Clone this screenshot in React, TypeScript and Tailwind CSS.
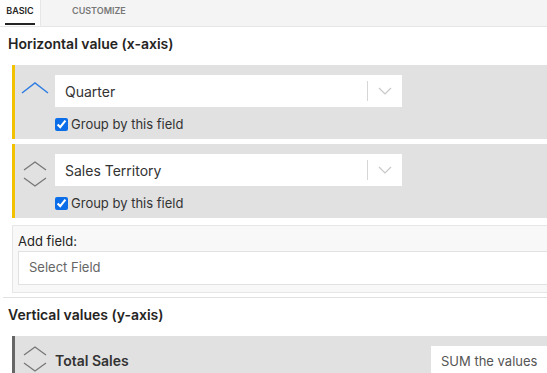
import React from "react"

function ChevronDown() {
  return (
    <svg width="14" height="8" viewBox="0 0 14 8" fill="none">
      <path d="M1 1l6 6 6-6" stroke="#c8c8c8" strokeWidth="1.2" />
    </svg>
  )
}

function UpIcon() {
  return (
    <svg width="28" height="14" viewBox="0 0 28 14" fill="none">
      <path d="M1 12L14 2l13 10" stroke="#2f7de1" strokeWidth="1.5" />
    </svg>
  )
}

function SortIcon() {
  return (
    <svg width="26" height="28" viewBox="0 0 26 28" fill="none">
      <path d="M2 10L13 2l11 8" stroke="#777" strokeWidth="1.3" />
      <path d="M2 18l11 8 11-8" stroke="#777" strokeWidth="1.3" />
    </svg>
  )
}

function FieldCard({ label, up }: { label: string; up?: boolean }) {
  return (
    <div className="ml-3 flex h-[74px] border-l-[3px] border-[#f2c200] bg-[#e1e1e1] pt-[10px]">
      <div className="flex w-[40px] justify-center pt-[6px]">{up ? <UpIcon /> : <SortIcon />}</div>
      <div className="flex flex-col">
        <div className="flex h-[32px] w-[347px] items-center bg-white pl-[10px]">
          <span className="flex-1 text-[14px] text-[#333]">{label}</span>
          <div className="h-[20px] w-px bg-[#d6d6d6]" />
          <div className="flex w-[34px] justify-center">
            <ChevronDown />
          </div>
        </div>
        <label className="mt-[8px] flex items-center gap-[3px] text-[13px] text-[#333]">
          <input type="checkbox" defaultChecked className="m-0 h-[13px] w-[13px] accent-[#0b6ee8]" />
          Group by this field
        </label>
      </div>
    </div>
  )
}

export default function App() {
  return (
    <div className="h-[373px] w-[547px] overflow-hidden bg-white font-['Inter',sans-serif] text-[#252423]">
      {/* Tabs */}
      <div className="flex h-[27px] border-b border-[#e6e6e6]">
        <div className="flex w-[40px] flex-col items-center justify-center bg-white">
          <span className="mt-[3px] text-[9px] font-semibold text-[#252423]">BASIC</span>
          <div className="mt-[5px] h-[2px] w-[30px] bg-[#252423]" />
        </div>
        <div className="flex flex-1 items-center border-l border-[#e6e6e6] bg-[#f4f4f4] pl-[31px] pb-[4px]">
          <span className="text-[9px] font-semibold text-[#777]">CUSTOMIZE</span>
        </div>
      </div>

      <div className="px-[8px] pt-[8px] pb-[12px] text-[14px] font-semibold leading-[18px]">Horizontal value (x-axis)</div>

      <div className="flex flex-col gap-[5px]">
        <FieldCard label="Quarter" up />
        <FieldCard label="Sales Territory" />
      </div>

      {/* Add field */}
      <div className="ml-3 mt-[7px] h-[68px] border border-r-0 border-[#e6e6e6] bg-[#f8f8f8] pl-[5px] pt-[6px]">
        <div className="text-[13px] leading-[18px] text-[#252423]">Add field:</div>
        <div className="mt-[1px] flex h-[34px] items-center border border-r-0 border-[#e1e1e1] bg-white pl-[10px] text-[13px] text-[#666]">
          Select Field
        </div>
      </div>

      <div className="ml-[3px] mt-[4px] border-t border-[#e1e1e1]" />

      <div className="px-[8px] pt-[8px] pb-[12px] text-[14px] font-semibold leading-[18px]">Vertical values (y-axis)</div>

      <div className="ml-3 flex h-[40px] border-l-[3px] border-[#666] bg-[#e1e1e1] pt-[8px]">
        <div className="flex w-[40px] justify-center pt-[1px]">
          <SortIcon />
        </div>
        <div className="flex-1 pt-[6px] text-[14px] font-semibold text-[#333]">Total Sales</div>
        <div className="mt-[2px] h-[32px] w-[116px] bg-white pl-[10px] pt-[6px] text-[13px] text-[#555]">SUM the values</div>
      </div>
    </div>
  )
}
